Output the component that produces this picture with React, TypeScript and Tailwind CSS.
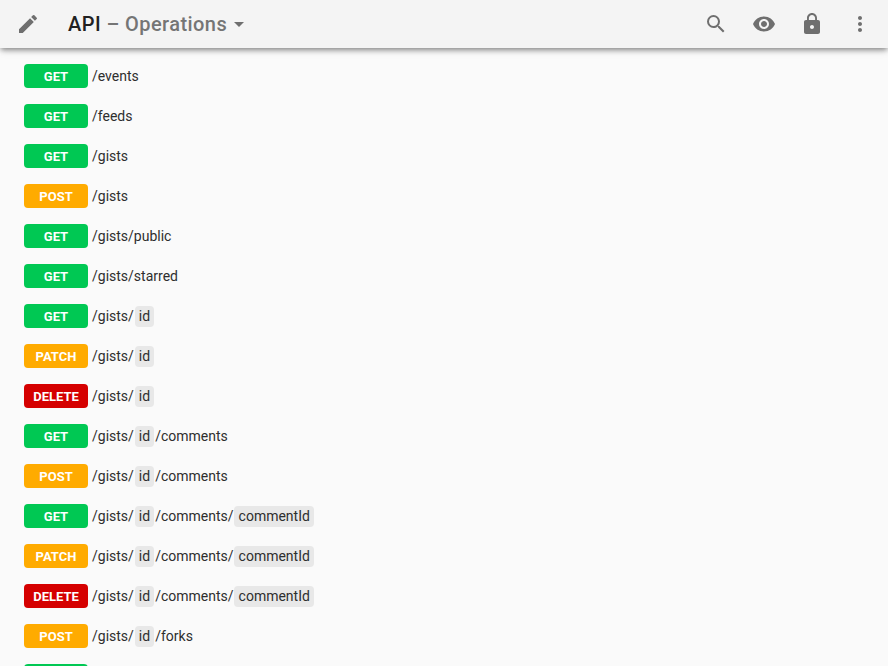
import React from "react";

type Method = "GET" | "POST" | "PATCH" | "DELETE";

const colors: Record<Method, string> = {
  GET: "bg-[#00c853]",
  POST: "bg-[#ffab00]",
  PATCH: "bg-[#ffab00]",
  DELETE: "bg-[#d50000]",
};

const operations: [Method, string][] = [
  ["GET", "/events"],
  ["GET", "/feeds"],
  ["GET", "/gists"],
  ["POST", "/gists"],
  ["GET", "/gists/public"],
  ["GET", "/gists/starred"],
  ["GET", "/gists/{id}"],
  ["PATCH", "/gists/{id}"],
  ["DELETE", "/gists/{id}"],
  ["GET", "/gists/{id}/comments"],
  ["POST", "/gists/{id}/comments"],
  ["GET", "/gists/{id}/comments/{commentId}"],
  ["PATCH", "/gists/{id}/comments/{commentId}"],
  ["DELETE", "/gists/{id}/comments/{commentId}"],
  ["POST", "/gists/{id}/forks"],
];

function Icon({ d }: { d: string }) {
  return (
    <svg viewBox="0 0 24 24" className="size-6 shrink-0 fill-[#6f6f6f]">
      <path d={d} />
    </svg>
  );
}

function Path({ value }: { value: string }) {
  return (
    <span className="flex items-center pl-1 text-sm leading-[19px] text-[#2e2e2e]">
      {value.split(/[{}]/).map((part, i) =>
        i % 2 ? (
          <span key={i} className="mr-px ml-[0.75px] rounded-[4px] bg-[#e8e8e8] py-px pr-1 pl-[4.25px]">
            {part}
          </span>
        ) : (
          <span key={i}>{part}</span>
        ),
      )}
    </span>
  );
}

export default function App() {
  return (
    <div className="h-screen overflow-hidden bg-[#fafafa] font-['Roboto',sans-serif] antialiased">
      <header className="relative flex h-12 items-center bg-[#f4f4f4] px-4 shadow-[0_3px_5px_-1px_rgba(0,0,0,0.4),0_1px_10px_rgba(0,0,0,0.14)]">
        <Icon d="M3 17.25V21h3.75L17.81 9.94l-3.75-3.75L3 17.25zM20.71 7.04a.996.996 0 0 0 0-1.41l-2.34-2.34a.996.996 0 0 0-1.41 0l-1.83 1.83 3.75 3.75 1.83-1.83z" />
        <h1 className="ml-7 flex items-center text-xl font-medium tracking-[0.43px] text-[#757575]">
          <span className="whitespace-pre"><span className="text-[#212121]">API</span> – Operations</span>
          <Icon d="M7 10l5 5 5-5z" />
        </h1>
        <div className="ml-auto flex gap-6">
          <Icon d="M15.5 14h-.79l-.28-.27A6.471 6.471 0 0 0 16 9.5 6.5 6.5 0 1 0 9.5 16c1.61 0 3.09-.59 4.23-1.57l.27.28v.79l5 4.99L20.49 19l-4.99-5zm-6 0C7.01 14 5 11.99 5 9.5S7.01 5 9.5 5 14 7.01 14 9.5 11.99 14 9.5 14z" />
          <Icon d="M12 4.5C7 4.5 2.73 7.61 1 12c1.73 4.39 6 7.5 11 7.5s9.27-3.11 11-7.5c-1.73-4.39-6-7.5-11-7.5zM12 17c-2.76 0-5-2.24-5-5s2.24-5 5-5 5 2.24 5 5-2.24 5-5 5zm0-8c-1.66 0-3 1.34-3 3s1.34 3 3 3 3-1.34 3-3-1.34-3-3-3z" />
          <Icon d="M18 8h-1V6c0-2.76-2.24-5-5-5S7 3.24 7 6v2H6c-1.1 0-2 .9-2 2v10c0 1.1.9 2 2 2h12c1.1 0 2-.9 2-2V10c0-1.1-.9-2-2-2zm-6 9c-1.1 0-2-.9-2-2s.9-2 2-2 2 .9 2 2-.9 2-2 2zm3.1-9H8.9V6c0-1.71 1.39-3.1 3.1-3.1 1.71 0 3.1 1.39 3.1 3.1v2z" />
          <Icon d="M12 8c1.1 0 2-.9 2-2s-.9-2-2-2-2 .9-2 2 .9 2 2 2zm0 2c-1.1 0-2 .9-2 2s.9 2 2 2 2-.9 2-2-.9-2-2-2zm0 6c-1.1 0-2 .9-2 2s.9 2 2 2 2-.9 2-2-.9-2-2-2z" />
        </div>
      </header>
      <main className="px-6 pt-2">
        {operations.map(([method, path], i) => (
          <div key={i} className="flex h-10 items-center">
            <span className={`flex h-6 w-16 items-center justify-center rounded-[4px] pt-px text-[13px] leading-[23px] font-bold text-white ${colors[method]}`}>
              {method}
            </span>
            <Path value={path} />
          </div>
        ))}
        <div className="flex h-10 items-center">
          <span className="h-6 w-16 rounded-[4px] bg-[#00c853]" />
        </div>
      </main>
    </div>
  );
}
